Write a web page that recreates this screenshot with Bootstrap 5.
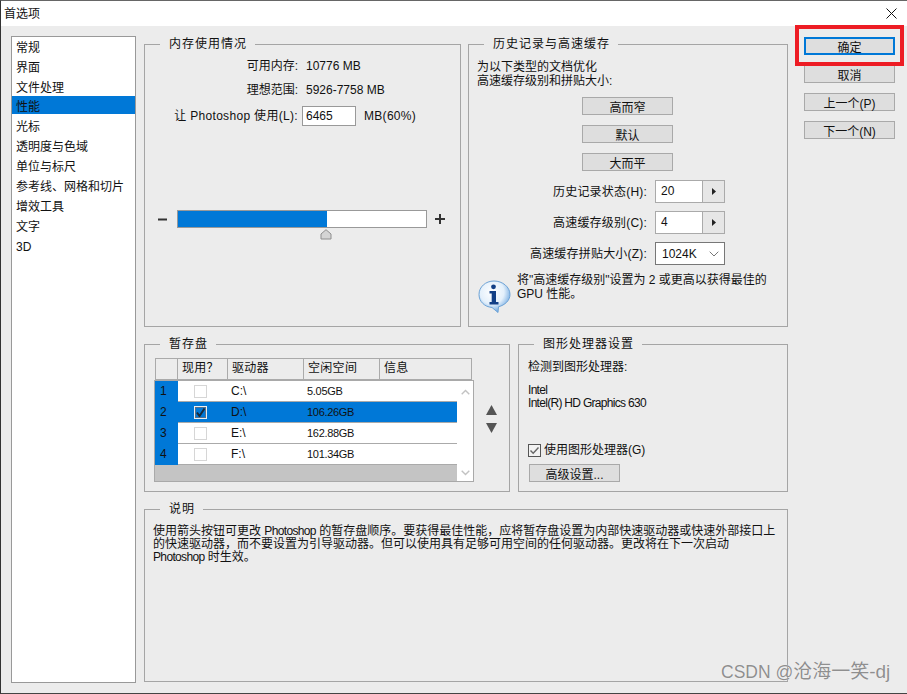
<!DOCTYPE html>
<html lang="zh-CN">
<head>
<meta charset="utf-8">
<title>首选项</title>
<link href="https://cdn.jsdelivr.net/npm/bootstrap@5.3.0/dist/css/bootstrap.min.css" rel="stylesheet">
<style>
html,body{margin:0;height:694px;overflow:hidden;background:#ececec}
body,.btn,.form-control,.form-select,.table{font-family:"Liberation Sans","Noto Sans CJK SC",sans-serif;font-size:12px;line-height:14px;color:#111}
.win{position:relative;height:694px;border-top:1px solid #666;border-left:1px solid #333;border-bottom:1px solid #444;background:#ececec;display:flex;flex-direction:column}
.ttl{height:25px;flex:none;background:#fff;padding:6px 3px 0;font-size:12px}
.mainrow{flex:1;padding:10px 11px 0 10px;display:flex;align-items:flex-start}
.catlist{width:125px;height:647px;flex:none;border:1px solid #999;background:#fff;border-radius:0;margin-right:8px}
.catlist .list-group-item{border:0;padding:4px 0 0 4px;height:18px;margin-bottom:2px;line-height:14px;font-size:12px;background:transparent;color:#111;border-radius:0}
.catlist .list-group-item.active{background:#0078d7;color:#111}
.midcol{width:644px;flex:none;margin-top:1px;display:flex;flex-direction:column;gap:10px}
.rowa{display:flex;gap:7px;height:290px}
.rowb{display:flex;gap:8px;height:155px}
.pgroup{border:1px solid #a5a5a5;padding:0;margin:0;min-width:0}
.pgroup legend{float:none;width:auto;font-size:12px;line-height:14px;letter-spacing:1px;padding:0 8px 0 9px;margin:0 0 0 15px;color:#111}
.g-mem{width:317px}.g-hist{width:320px;padding:0 8px}
.g-scr{width:366px}.g-gpu{width:270px;padding:0 9px}
.g-note{height:180px;padding:0 8px}
.g-hist legend,.g-note legend{margin-left:7px}
.g-gpu legend{margin-left:6px}
.memrows{display:grid;grid-template-columns:153px auto;column-gap:8px;row-gap:10px;padding-top:8px;align-items:center}
.memrows>.lbl{text-align:right}
.memrows>.lbl.wide{letter-spacing:.32px;margin-top:-1px}
.memrows .inl{display:flex;align-items:center;margin:-1px 0 0 -4px;gap:8px;letter-spacing:.3px}
.form-control.pnum{width:54px;height:20px;border:1px solid #999;border-radius:0;padding:0 3px;box-shadow:none;background:#fff}
.sliderow{display:flex;align-items:center;margin:84px 0 0 13px}
.sgn{flex:none;font-size:0}
.sgn.neg{width:19px}
.sgn.pos{margin-left:8px}
.sgn svg{display:block}
.trk{position:relative;width:250px;flex:none}
.progress.ptrack{height:18px;border:1px solid #999;border-radius:0;background:#fff}
.progress.ptrack .progress-bar{background:#0078d7}
.thumb{position:absolute;left:143px;top:19px;display:block}
.histtxt{padding-top:9px}
.btnstack{display:flex;flex-direction:column;align-items:center;gap:10px;margin-top:9px;padding-right:1px}
.btn.pbtn{width:91px;height:18px;padding:4px 0 0;border:1px solid #a9a9a9;border-radius:0;background:#dedede;color:#111;line-height:12px;font-size:12px}
.btn.pbtn.prim{border:2px solid #0078d7;padding-top:3px}
.histrows{display:grid;grid-template-columns:170px 70px;column-gap:8px;row-gap:8px;margin-top:9px;align-items:center}
.histrows>.lbl{text-align:right;letter-spacing:.2px}
.spin{display:flex;height:23px;border:1px solid #aaa;background:#fff}
.spin .val{flex:1;padding:3px 0 0 5px}
.spin .arr{width:22px;flex:none;border-left:1px solid #aaa;background:#e6e6e6;display:flex;align-items:center;justify-content:center}
.form-select.psel{height:23px;border:1px solid #777;border-radius:0;padding:0 0 0 6px;box-shadow:none;background-color:#fff;background-position:right 5px center;background-size:10px 6px;background-image:url("data:image/svg+xml,%3csvg xmlns='http://www.w3.org/2000/svg' viewBox='0 0 10 6'%3e%3cpath fill='none' stroke='%23777' d='M.7.7 5 5l4.3-4.3'/%3e%3c/svg%3e")}
.infoline{display:flex;align-items:flex-start;margin-top:8px;gap:6px}
.infoline svg{flex:none;margin:7px 0 0 1px}
.scrwrap{display:flex;padding:7px 0 0 9px}
.scrtbl{width:320px;flex:none}
.scrhead{margin:0 0 0 1px;width:317px;height:22px;table-layout:fixed;border-collapse:collapse;background:#ececec}
.scrhead th{border:1px solid #aaa;padding:2px 0 0 4px;font-weight:400;height:21px;vertical-align:top;background:#ececec;color:#111;letter-spacing:.3px}
.scrframe{display:flex;height:102px;border:1px solid #a9a9a9;background:#c4c4c4}
.scrrows{width:302px;flex:none;table-layout:fixed;border-collapse:separate;border-spacing:0;align-self:flex-start;margin:0}
.scrrows td{height:21px;padding:3px 0 0 3px;vertical-align:top;background:#fff;border-bottom:1px solid #aaa;color:#111;box-shadow:none}
.scrrows td.idx{background:#0078d7;border-bottom:0;padding-left:5px}
.scrrows tr.sel td{background:#0078d7}
.scrrows td.amt{font-size:11px;letter-spacing:-.3px}
.cb{display:block;width:13px;height:13px;border:1px solid #d6d6d6;background:#fff;margin:1px 0 0 13px}
.cb.on{border:1px solid #eee;outline:1px solid #52708f;outline-offset:-2px;background:#0078d7}
.cb svg{display:block}
.vscroll{width:16px;flex:none;background:#fff;display:flex;flex-direction:column;justify-content:space-between;align-items:center;padding:8px 0 5px}
.arrows{flex:1;display:flex;flex-direction:column;align-items:center;gap:8px;padding:47px 0 0 0}
.arrows svg{display:block}
.gputxt{padding-top:9px}
.gpuinfo{margin-top:10px;line-height:13px;letter-spacing:-.7px}
.form-check.pchk{display:flex;align-items:center;min-height:14px;padding:0;margin:33px 0 0 0;gap:3px}
.form-check.pchk .form-check-input{float:none;margin:0;width:13px;height:13px;border:1px solid #555;border-radius:0;background-color:#f2f2f2;box-shadow:none;background-image:url("data:image/svg+xml,%3csvg xmlns='http://www.w3.org/2000/svg' viewBox='0 0 13 13'%3e%3cpath fill='none' stroke='%23666' stroke-width='1.4' d='M2.5 6.5 5.2 9.3 10.5 3.5'/%3e%3c/svg%3e");background-size:13px}
.gpubtn{margin:7px 0 0 1px;display:block}
.notetxt{padding-top:9px;line-height:13px;margin:0}
.notetxt .tight{letter-spacing:-.65px}
.sidecol{width:91px;flex:none;margin:1px 0 0 16px;display:flex;flex-direction:column;gap:10px}
.redbox{position:absolute;left:794px;top:24px;width:109px;height:41px;border:4px solid #ed1c24;pointer-events:none}
.wmark{position:absolute;left:720px;top:661px;font-size:19px;line-height:20px;color:#8f8f8f;white-space:nowrap;text-shadow:0 0 1px #fff}
.wmark .w1{font-size:17.5px}
.closex{position:absolute;left:885px;top:7px}
</style>
</head>
<body>
<div class="win">
  <div class="ttl">首选项</div>
  <svg class="closex" width="11" height="11" viewBox="0 0 11 11"><path d="M.5.5l10 10M10.5.5l-10 10" stroke="#111" stroke-width="1" fill="none"/></svg>
  <div class="mainrow">
    <div class="list-group catlist">
      <div class="list-group-item">常规</div>
      <div class="list-group-item">界面</div>
      <div class="list-group-item">文件处理</div>
      <div class="list-group-item active">性能</div>
      <div class="list-group-item">光标</div>
      <div class="list-group-item">透明度与色域</div>
      <div class="list-group-item">单位与标尺</div>
      <div class="list-group-item">参考线、网格和切片</div>
      <div class="list-group-item">增效工具</div>
      <div class="list-group-item">文字</div>
      <div class="list-group-item">3D</div>
    </div>
    <div class="midcol">
      <div class="rowa">
        <fieldset class="pgroup g-mem">
          <legend>内存使用情况</legend>
          <div class="memrows">
            <div class="lbl">可用内存:</div><div>10776 MB</div>
            <div class="lbl">理想范围:</div><div>5926-7758 MB</div>
            <div class="lbl wide">让 Photoshop 使用(L):</div>
            <div class="inl"><input class="form-control pnum" value="6465"><span>MB(60%)</span></div>
          </div>
          <div class="sliderow">
            <div class="sgn neg"><svg width="9" height="3" viewBox="0 0 9 3"><rect width="9" height="2" y=".5" fill="#333"/></svg></div>
            <div class="trk">
              <div class="progress ptrack"><div class="progress-bar" style="width:60%"></div></div>
              <svg class="thumb" width="12" height="11" viewBox="0 0 12 11"><path d="M6 .7 11 5v5H1V5z" fill="#d4d4d4" stroke="#8e8e8e"/></svg>
            </div>
            <div class="sgn pos"><svg width="10" height="10" viewBox="0 0 10 10"><path d="M0 4h10v2H0zM4 0h2v10H4z" fill="#333"/></svg></div>
          </div>
        </fieldset>
        <fieldset class="pgroup g-hist">
          <legend>历史记录与高速缓存</legend>
          <div class="histtxt">为以下类型的文档优化<br>高速缓存级别和拼贴大小:</div>
          <div class="btnstack">
            <button class="btn pbtn" type="button">高而窄</button>
            <button class="btn pbtn" type="button">默认</button>
            <button class="btn pbtn" type="button">大而平</button>
          </div>
          <div class="histrows">
            <div class="lbl">历史记录状态(H):</div>
            <div class="spin"><div class="val">20</div><div class="arr"><svg width="4" height="7" viewBox="0 0 4 7"><path d="M0 0l4 3.5L0 7z" fill="#222"/></svg></div></div>
            <div class="lbl">高速缓存级别(C):</div>
            <div class="spin"><div class="val">4</div><div class="arr"><svg width="4" height="7" viewBox="0 0 4 7"><path d="M0 0l4 3.5L0 7z" fill="#222"/></svg></div></div>
            <div class="lbl">高速缓存拼贴大小(Z):</div>
            <select class="form-select psel"><option>1024K</option></select>
          </div>
          <div class="infoline">
            <svg width="33" height="33" viewBox="0 0 33 33">
              <defs><radialGradient id="ib" cx=".42" cy=".35" r=".7"><stop offset="0" stop-color="#fff"/><stop offset=".55" stop-color="#e4f0fb"/><stop offset="1" stop-color="#5a9bdc"/></radialGradient></defs>
              <path d="M16 1C7.500 1 1 7 1 14.500 1 21.500 6.500 26.800 14 27.500L20 32.500 20.500 26.800C27 25 32 20.500 32 14.500 32 7 24.500 1 16 1z" fill="url(#ib)" stroke="#6ea3d6"/>
              <circle cx="15.500" cy="6.800" r="2.400" fill="#123f86"/>
              <path d="M11.500 11h6.500v11h2.500v2.500h-9V22h2.200v-8.500h-2.200z" fill="#123f86"/>
            </svg>
            <div>将"高速缓存级别"设置为 2 或更高以获得最佳的<br>GPU 性能。</div>
          </div>
        </fieldset>
      </div>
      <div class="rowb">
        <fieldset class="pgroup g-scr">
          <legend>暂存盘</legend>
          <div class="scrwrap">
            <div class="scrtbl">
              <table class="table scrhead mb-0">
                <colgroup><col style="width:22px"><col style="width:50px"><col style="width:76px"><col style="width:76px"><col></colgroup>
                <tr><th></th><th>现用？</th><th>驱动器</th><th>空闲空间</th><th>信息</th></tr>
              </table>
              <div class="scrframe">
                <table class="table scrrows">
                  <colgroup><col style="width:23px"><col style="width:50px"><col style="width:76px"><col style="width:76px"><col></colgroup>
                  <tr><td class="idx">1</td><td><span class="cb"></span></td><td>C:\</td><td class="amt">5.05GB</td><td></td></tr>
                  <tr class="sel"><td class="idx">2</td><td><span class="cb on"><svg width="11" height="11" viewBox="0 0 11 11"><path d="M2 5.500 4.500 9 9.500 1.500" fill="none" stroke="#1b2a3a" stroke-width="2"/></svg></span></td><td>D:\</td><td class="amt">106.26GB</td><td></td></tr>
                  <tr><td class="idx">3</td><td><span class="cb"></span></td><td>E:\</td><td class="amt">162.88GB</td><td></td></tr>
                  <tr><td class="idx">4</td><td><span class="cb"></span></td><td>F:\</td><td class="amt">101.34GB</td><td></td></tr>
                </table>
                <div class="vscroll">
                  <svg width="9" height="6" viewBox="0 0 9 6"><path d="M.7 5.300 4.500 1.500l3.800 3.800" fill="none" stroke="#c2c2c2" stroke-width="1.400"/></svg>
                  <svg width="9" height="6" viewBox="0 0 9 6"><path d="M.7.700 4.500 4.500 8.300.700" fill="none" stroke="#c2c2c2" stroke-width="1.400"/></svg>
                </div>
              </div>
            </div>
            <div class="arrows">
              <svg width="11" height="10" viewBox="0 0 11 10"><path d="M5.500 0 11 10H0z" fill="#555"/></svg>
              <svg width="11" height="10" viewBox="0 0 11 10"><path d="M0 0h11L5.500 10z" fill="#555"/></svg>
            </div>
          </div>
        </fieldset>
        <fieldset class="pgroup g-gpu">
          <legend>图形处理器设置</legend>
          <div class="gputxt">检测到图形处理器:</div>
          <div class="gpuinfo">Intel<br>Intel(R) HD Graphics 630</div>
          <div class="form-check pchk">
            <input class="form-check-input" type="checkbox" id="gpuuse" checked>
            <label class="form-check-label" for="gpuuse">使用图形处理器(G)</label>
          </div>
          <button class="btn pbtn gpubtn" type="button">高级设置...</button>
        </fieldset>
      </div>
      <fieldset class="pgroup g-note">
        <legend>说明</legend>
        <p class="notetxt">使用箭头按钮可更改 <span class="tight">Photoshop</span> 的暂存盘顺序。要获得最佳性能，应将暂存盘设置为内部快速驱动器或快速外部接口上<br>的快速驱动器，而不要设置为引导驱动器。但可以使用具有足够可用空间的任何驱动器。更改将在下一次启动<br><span class="tight">Photoshop</span> 时生效。</p>
      </fieldset>
    </div>
    <div class="sidecol">
      <button class="btn pbtn prim" type="button">确定</button>
      <button class="btn pbtn" type="button">取消</button>
      <button class="btn pbtn" type="button">上一个(P)</button>
      <button class="btn pbtn" type="button">下一个(N)</button>
    </div>
  </div>
  <div class="redbox"></div>
  <div class="wmark"><span class="w1">CSDN @</span>沧海一笑-dj</div>
</div>
<script src="https://cdn.jsdelivr.net/npm/bootstrap@5.3.0/dist/js/bootstrap.bundle.min.js"></script>
</body>
</html>
